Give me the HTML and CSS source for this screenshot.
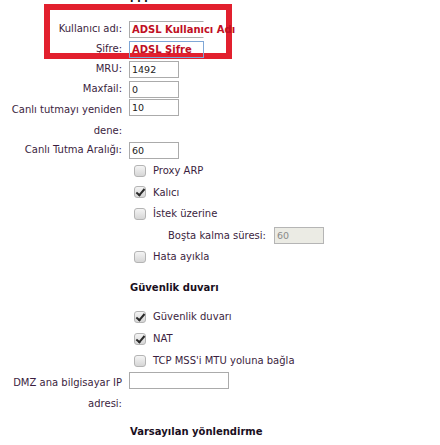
FILE: index.html
```html
<!DOCTYPE html>
<html lang="tr">
<head>
<meta charset="utf-8">
<link rel="stylesheet" href="styles.css">
</head>
<body>
<div class="page">
  <div class="cut-title">ppp</div>
  <div class="form">
    <div class="row">
      <div class="label">Kullanıcı adı:</div>
      <div class="field"><div class="input wide open"><span class="hint">ADSL Kullanıcı Adı</span></div></div>
    </div>
    <div class="row">
      <div class="label">Şifre:</div>
      <div class="field"><div class="input wide focus"><span class="hint">ADSL Şifre</span></div></div>
    </div>
    <div class="row">
      <div class="label">MRU:</div>
      <div class="field"><div class="input">1492</div></div>
    </div>
    <div class="row">
      <div class="label">Maxfail:</div>
      <div class="field"><div class="input">0</div></div>
    </div>
    <div class="row tall">
      <div class="label">Canlı tutmayı yeniden dene:</div>
      <div class="field"><div class="input">10</div></div>
    </div>
    <div class="row">
      <div class="label">Canlı Tutma Aralığı:</div>
      <div class="field"><div class="input">60</div></div>
    </div>
    <div class="checks">
      <div class="check"><span class="box"></span>Proxy ARP</div>
      <div class="check"><span class="box on"></span>Kalıcı</div>
      <div class="check"><span class="box"></span>İstek üzerine</div>
      <div class="sub"><span>Boşta kalma süresi:</span><div class="input disabled">60</div></div>
      <div class="check"><span class="box"></span>Hata ayıkla</div>
    </div>
    <div class="heading">Güvenlik duvarı</div>
    <div class="checks fw">
      <div class="check"><span class="box on"></span>Güvenlik duvarı</div>
      <div class="check"><span class="box on"></span>NAT</div>
      <div class="check"><span class="box"></span>TCP MSS'i MTU yoluna bağla</div>
    </div>
    <div class="row tall">
      <div class="label">DMZ ana bilgisayar IP adresi:</div>
      <div class="field"><div class="input ip"></div></div>
    </div>
    <div class="heading last">Varsayılan yönlendirme</div>
  </div>
  <div class="annot"></div>
</div>
</body>
</html>
```

FILE: styles.css
```css
html, body {
  margin: 0;
  padding: 0;
  background: #ffffff;
}
body {
  font-family: "DejaVu Sans", Verdana, sans-serif;
  font-size: 10px;
  color: #3b1e40;
  width: 440px;
  height: 445px;
  overflow: hidden;
}
.page {
  position: relative;
  display: flow-root;
}
.cut-title {
  font-weight: bold;
  font-size: 10px;
  line-height: 12px;
  height: 12px;
  margin-top: -9px;
  padding-left: 130px;
  color: #111;
}
.form {
  padding-top: 16px;
  padding-left: 8px;
}
.row {
  display: grid;
  grid-template-columns: 114px 1fr;
  column-gap: 7px;
  height: 20px;
  align-items: center;
}
.row.tall {
  height: 41px;
  align-items: start;
}
.label {
  text-align: right;
  line-height: 20px;
}
.row.tall .label {
  line-height: 21px;
}
.input {
  box-sizing: border-box;
  width: 50px;
  height: 17px;
  border: 1px solid #ababab;
  background: #fff;
  padding: 0 2px;
  line-height: 15px;
  font-size: 9.5px;
  color: #222;
  white-space: nowrap;
}
.input.wide {
  width: 75px;
  overflow: visible;
  position: relative;
  z-index: 2;
  background: transparent;
}
.input.open {
  border-right-color: transparent;
}
.input.focus {
  border-color: #7fa7d6;
}
.input.ip {
  width: 100px;
}
.input.disabled {
  background: #ebebe4;
  color: #8a8a8a;
  border-color: #b5b5b5;
}
.hint {
  color: #c00f24;
  font-weight: bold;
  font-size: 10px;
}
.checks {
  padding-left: 126px;
}
.check {
  display: flex;
  align-items: center;
  height: 21.5px;
}
.fw .check {
  height: 22px;
}
.box {
  box-sizing: border-box;
  width: 12px;
  height: 12px;
  border: 1px solid #b4b4b4;
  border-radius: 3px;
  background: linear-gradient(#f4f4f4, #d6d6d6);
  margin-right: 7px;
  position: relative;
  flex: none;
}
.box.on::after {
  content: "";
  position: absolute;
  left: 3px;
  top: 0px;
  width: 3px;
  height: 7px;
  border: solid #2a2a2a;
  border-width: 0 2px 2px 0;
  transform: rotate(40deg);
}
.sub {
  display: flex;
  align-items: center;
  height: 21.5px;
  padding-left: 34px;
  gap: 8px;
}
.heading {
  font-weight: bold;
  line-height: 20px;
  padding-left: 122px;
  margin-top: 10px;
  margin-bottom: 8px;
  color: #1a0f1e;
}
.heading.last {
  margin-top: 9px;
  margin-bottom: 0;
}
.annot {
  position: absolute;
  left: 44px;
  top: 4px;
  width: 188px;
  height: 55px;
  box-sizing: border-box;
  border: 6px solid #e2202e;
  z-index: 1;
}
```
